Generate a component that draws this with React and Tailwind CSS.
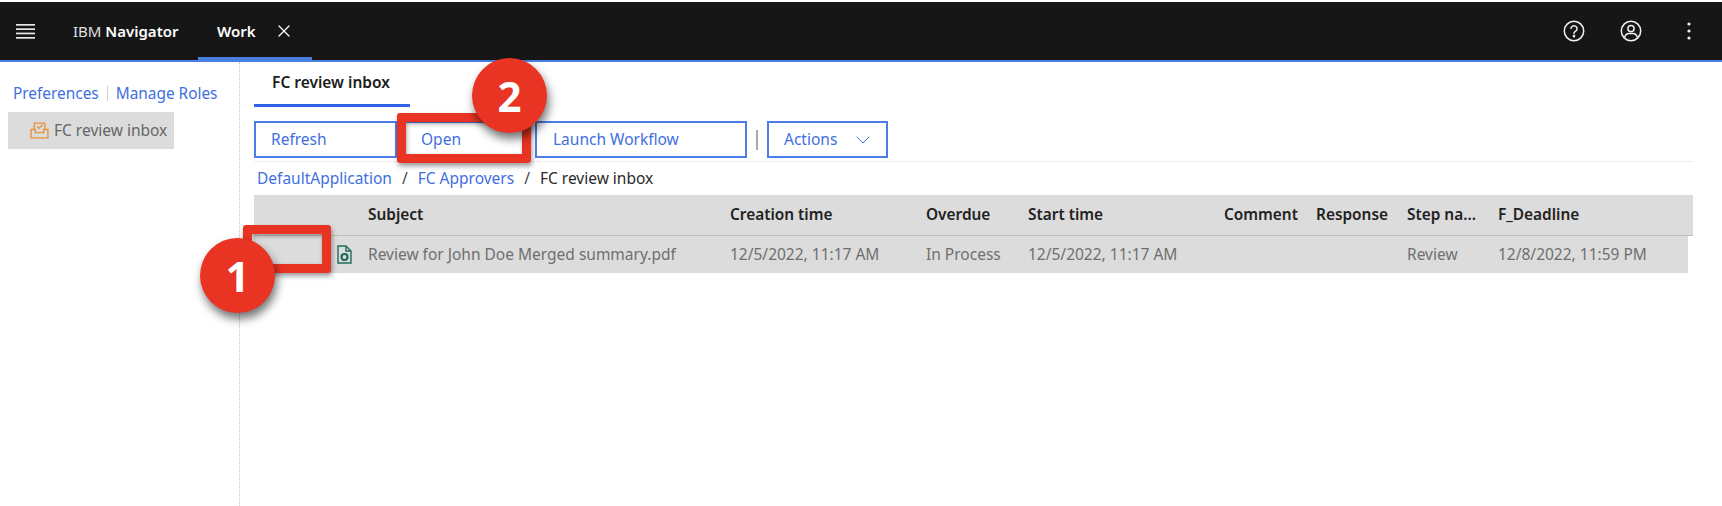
import React from "react";
import { ChevronDown, X } from "lucide-react";

const font = { fontFamily: '"Noto Sans", "Open Sans", sans-serif' };
const cols = "grid grid-cols-[114px_362px_196px_102px_196px_92px_91px_91px_1fr]";

function Annotation({ n, className }) {
  return (
    <div className={`absolute flex items-center justify-center rounded-full bg-[#e93323] text-white font-bold text-[42px] leading-none shadow-[2px_6px_10px_rgba(0,0,0,0.55)] ${className}`}>
      {n}
    </div>
  );
}

function Btn({ children, className = "" }) {
  return (
    <button className={`h-[37px] border-2 border-[#4f7de8] bg-white text-left text-[15.5px] text-[#3f6fe0] ${className}`}>
      {children}
    </button>
  );
}

export default function App() {
  return (
    <div className="relative w-[1722px] h-[506px] overflow-hidden bg-white pt-[2px]" style={font}>
      <header className="flex h-[60px] items-center border-b-2 border-[#4a7fe0] bg-[#161616] text-white">
        <svg width="19" height="15" viewBox="0 0 19 15" className="ml-[16px]" fill="#e8e8e8">
          <rect y="0" width="19" height="1.7" /><rect y="4.300" width="19" height="1.7" />
          <rect y="8.600" width="19" height="1.7" /><rect y="13" width="19" height="1.7" />
        </svg>
        <div className="ml-[38px] w-[107px] whitespace-nowrap text-[15px] text-[#e0e0e0]">IBM <span className="font-semibold text-white">Navigator</span></div>
        <div className="relative ml-[18px] flex h-full w-[114px] items-center pl-[19px]">
          <span className="text-[15px] font-semibold">Work</span>
          <X size={20} strokeWidth={1.5} className="ml-[18px]" />
          <div className="absolute bottom-0 left-0 right-0 h-[3px] bg-[#4a7fe0]" />
        </div>
        <div className="ml-auto flex items-center">
          <svg width="22" height="22" viewBox="0 0 22 22" fill="none" stroke="#f0f0f0" strokeWidth="1.5" strokeLinecap="round">
            <circle cx="11" cy="11" r="9.7" />
            <path d="M8 8.600a3 3 0 1 1 4.600 2.600c-1 .6-1.600 1.200-1.600 2.300" />
            <circle cx="11" cy="16.200" r=".6" fill="#f0f0f0" />
          </svg>
          <svg width="22" height="22" viewBox="0 0 22 22" fill="none" stroke="#f0f0f0" strokeWidth="1.5" className="ml-[35px]">
            <circle cx="11" cy="11" r="9.7" />
            <circle cx="11" cy="8.600" r="3.100" />
            <path d="M4.600 17.600c.6-3 2.600-4.200 4.400-4.200h4c1.800 0 3.800 1.200 4.400 4.200" />
          </svg>
          <svg width="4" height="18" viewBox="0 0 4 18" fill="#f0f0f0" className="ml-[45px] mr-[31px]">
            <circle cx="2" cy="2" r="1.600" /><circle cx="2" cy="9" r="1.600" /><circle cx="2" cy="16" r="1.600" />
          </svg>
        </div>
      </header>

      <div className="flex h-[444px]">
        <aside className="w-[240px] shrink-0 border-r border-dotted border-[#c4c4c4] pt-[20px]">
          <div className="flex items-center pl-[13px] text-[15.4px] text-[#3f6fe0]">
            <span>Preferences</span>
            <span className="mx-[8px] h-[15px] w-px bg-[#d0d0d0]" />
            <span>Manage Roles</span>
          </div>
          <div className="ml-[8px] mt-[7px] flex h-[37px] w-[166px] items-center bg-[#dcdcdc] pl-[22px] text-[15.5px] text-[#666666]">
            <svg width="19" height="17" viewBox="0 0 18 16" fill="none" stroke="#e8923c" strokeWidth="1.300" className="mr-[5px] shrink-0">
              <path d="M4 7V1h10v6" />
              <path d="M6.500 4l2 2 3.500-3.600" />
              <path d="M1 7h4v3h8V7h4v8H1z" />
            </svg>
            FC review inbox
          </div>
        </aside>

        <main className="flex-1 pl-[14px] pr-[29px]">
          <div className="flex h-[45px] w-[156px] items-center justify-center border-b-[3px] border-[#2f62e6] pr-[2px] text-[15.5px] font-semibold text-[#1c1c1c]">
            FC review inbox
          </div>
          <div className="mt-[14px] flex items-center border-b border-dotted border-[#dcdcdc] pb-[3px]">
            <Btn className="w-[143px] pl-[15px]">Refresh</Btn>
            <Btn className="w-[134px] -ml-[2px] pl-[24px]">Open</Btn>
            <Btn className="ml-[6px] w-[212px] pl-[16px]">Launch Workflow</Btn>
            <span className="mx-[9px] h-[20px] w-[2px] bg-[#a8a8a8]" />
            <Btn className="flex w-[121px] items-center pl-[15px]">
              Actions
              <ChevronDown size={24} strokeWidth={1} className="ml-[14px]" />
            </Btn>
          </div>
          <div className="flex h-[33px] items-center pl-[3px] text-[15.5px] text-[#3f6fe0]">
            <span>DefaultApplication</span>
            <span className="mx-[10px] text-[#444444]">/</span>
            <span>FC Approvers</span>
            <span className="mx-[10px] text-[#444444]">/</span>
            <span className="text-[#2a2a2a]">FC review inbox</span>
          </div>
          <div className={`${cols} h-[41px] items-center border-b border-[#c0c0c0] bg-[#dcdcdc] text-[15.4px] font-semibold text-[#222222]`}>
            <span />
            <span>Subject</span>
            <span>Creation time</span>
            <span>Overdue</span>
            <span>Start time</span>
            <span>Comment</span>
            <span>Response</span>
            <span className="whitespace-nowrap">Step na...</span>
            <span>F_Deadline</span>
          </div>
          <div className={`${cols} mr-[5px] h-[37px] items-center bg-[#dcdcdc] text-[15.5px] text-[#6f6f6f]`}>
            <span className="flex justify-end pr-[16px]">
              <svg width="15" height="19" viewBox="0 0 15 19" fill="none" stroke="#1f6b5c" strokeWidth="1.400">
                <path d="M1 1h8l5 5v12H1z" />
                <path d="M9 1v5h5" />
                <circle cx="7.500" cy="12" r="3" strokeWidth="2.200" />
              </svg>
            </span>
            <span>Review for John Doe Merged summary.pdf</span>
            <span className="whitespace-nowrap">12/5/2022, 11:17 AM</span>
            <span>In Process</span>
            <span className="whitespace-nowrap">12/5/2022, 11:17 AM</span>
            <span />
            <span />
            <span>Review</span>
            <span className="whitespace-nowrap">12/8/2022, 11:59 PM</span>
          </div>
        </main>
      </div>

      <div className="absolute left-[397px] top-[113px] h-[50px] w-[134px] rounded-[3px] border-[9px] border-[#e93323] shadow-[1px_3px_5px_rgba(0,0,0,0.4),inset_1px_2px_4px_rgba(0,0,0,0.35)]" />
      <div className="absolute left-[243px] top-[225px] h-[48px] w-[88px] rounded-[3px] border-[9px] border-[#e93323] shadow-[1px_3px_5px_rgba(0,0,0,0.4),inset_1px_2px_4px_rgba(0,0,0,0.35)]" />
      <Annotation n="2" className="left-[472px] top-[58px] h-[75px] w-[75px]" />
      <Annotation n="1" className="left-[200px] top-[238px] h-[75px] w-[75px]" />
    </div>
  );
}
